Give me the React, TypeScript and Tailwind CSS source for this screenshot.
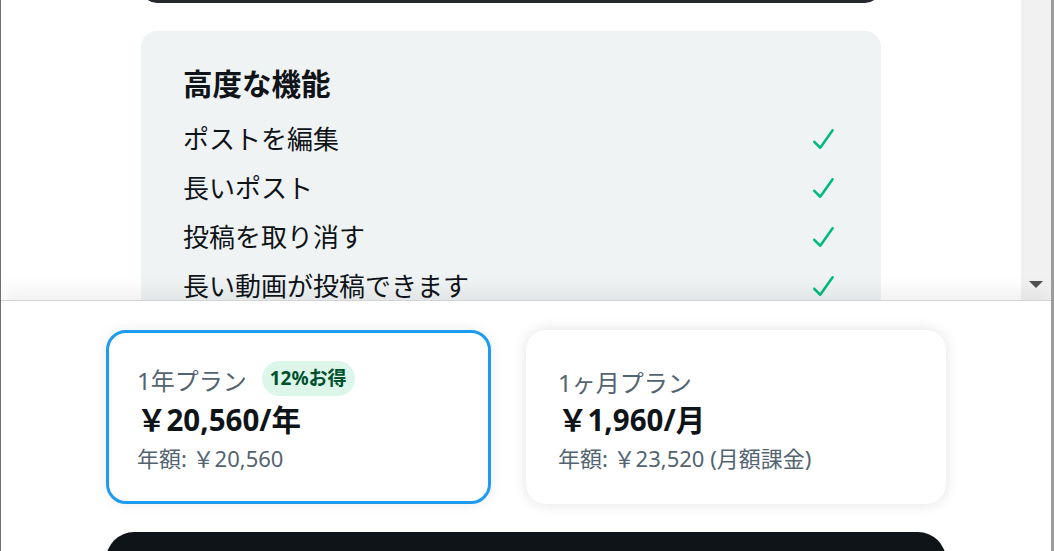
import React from "react";

const FONT = { fontFamily: '"Noto Sans", "Noto Sans CJK JP", sans-serif' };

function Check() {
  return (
    <svg viewBox="0 0 24 24" className="w-[30px] h-[30px] fill-[#00ba7c]">
      <path d="M9 20c-.264 0-.52-.104-.707-.293l-4.785-4.785c-.39-.39-.39-1.023 0-1.414s1.023-.39 1.414 0l3.946 3.945L18.075 4.41c.32-.45.94-.558 1.395-.24.45.318.56.942.24 1.394L9.817 19.577c-.17.24-.438.395-.732.42-.028.002-.057.003-.085.003z" />
    </svg>
  );
}

const items = ["ポストを編集", "長いポスト", "投稿を取り消す", "長い動画が投稿できます", "その他"];

export default function App() {
  return (
    <div
      className="w-[1054px] h-[551px] overflow-hidden bg-white flex flex-col border-l border-l-[#707070] border-r-[3px] border-r-[#9c9c9c]"
      style={FONT}
    >
      {/* scroll area */}
      <div className="h-[300px] flex shrink-0 overflow-hidden">
        <div className="flex-1 overflow-hidden">
          <div className="w-[740px] mx-auto mt-[-200px]">
            <div className="h-[203px] rounded-2xl bg-[#25282d]" />
            <div className="mt-[28px] rounded-2xl bg-[#eff3f4] px-[42px] pt-[35px] pb-6">
              <div className="h-[36px] leading-[36px] text-[29.5px] font-bold text-[#0f1419] mb-[12px]">
                高度な機能
              </div>
              {items.map((t) => (
                <div key={t} className="h-[49px] flex items-center justify-between">
                  <span className="text-[26px] text-[#0f1419] leading-[34px]">{t}</span>
                  <Check />
                </div>
              ))}
            </div>
          </div>
        </div>
        <div className="w-[30px] bg-[#f1f1f1] flex flex-col justify-end items-center pb-[12px]">
          <div className="w-0 h-0 border-l-[7px] border-r-[7px] border-t-[7px] border-l-transparent border-r-transparent border-t-[#505050]" />
        </div>
      </div>
      {/* bottom panel */}
      <div className="relative flex-1 bg-white border-t border-t-[#d4d4d4] shadow-[0_-10px_18px_rgba(0,0,0,0.06)] pt-[29px]">
        <div className="flex justify-center gap-[35px]">
          <div className="w-[385px] h-[174px] rounded-[20px] border-[3px] border-[#1d9bf0] bg-white shadow-[0_0_14px_rgba(0,0,0,0.08)] pl-[28px] flex flex-col justify-center">
            <div className="h-[35px] flex items-center gap-[15px]">
              <span className="text-[24px] text-[#536471] pt-[5px]">1年プラン</span>
              <span className="h-[35px] px-[8px] rounded-full bg-[#dcf6ea] text-[#00502e] font-bold text-[19px] flex items-center">
                12%お得
              </span>
            </div>
            <div className="h-[38px] flex items-center text-[29.5px] font-bold text-[#0f1419] mt-[6px]">
              ￥20,560/年
            </div>
            <div className="h-[30px] flex items-center text-[22px] text-[#536471] mt-[4px]">
              年額: ￥20,560
            </div>
          </div>
          <div className="w-[420px] h-[174px] rounded-[20px] bg-white shadow-[0_0_14px_rgba(0,0,0,0.12)] pl-[32px] flex flex-col justify-center">
            <div className="h-[35px] flex items-end">
              <span className="text-[24px] text-[#536471] leading-[26px]">1ヶ月プラン</span>
            </div>
            <div className="h-[38px] flex items-center text-[29.5px] font-bold text-[#0f1419] mt-[6px]">
              ￥1,960/月
            </div>
            <div className="h-[30px] flex items-center text-[22px] text-[#536471] mt-[4px]">
              年額: ￥23,520 (月額課金)
            </div>
          </div>
        </div>
        <div className="mx-auto mt-[28px] w-[840px] h-[56px] rounded-full bg-[#0f1419]" />
      </div>
    </div>
  );
}
